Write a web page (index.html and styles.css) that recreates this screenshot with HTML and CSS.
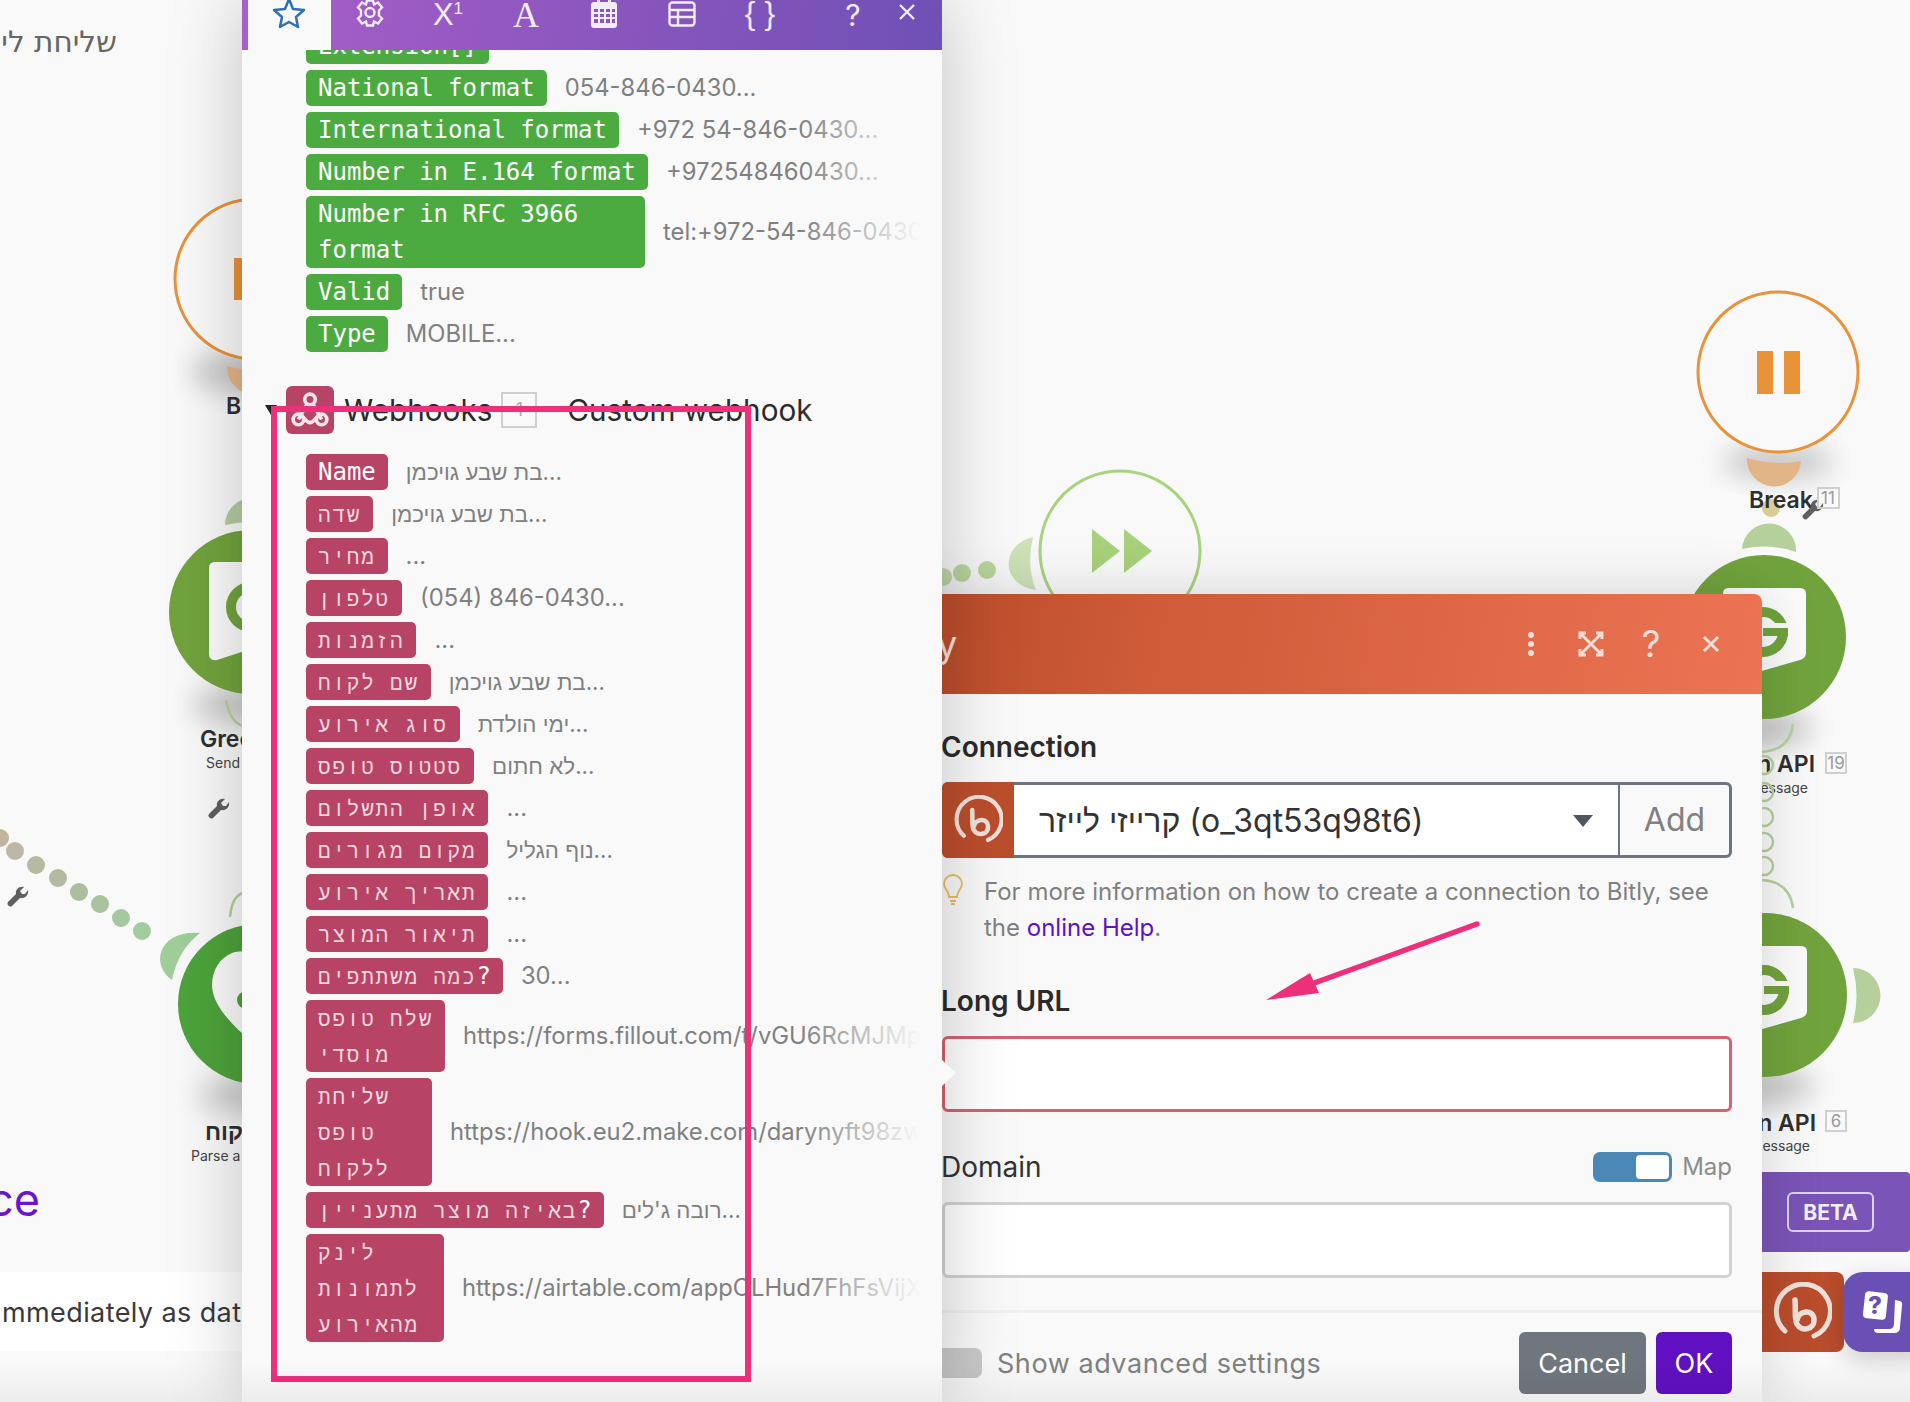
FILE: index.html
```html
<!DOCTYPE html>
<html lang="en">
<head>
<meta charset="utf-8">
<title>Scenario editor</title>
<link rel="stylesheet" href="styles.css">
</head>
<body>
<div class="stage">
  <svg class="canvas" width="1910" height="1402" viewBox="0 0 1910 1402">
    <defs>
      <filter id="blur" x="-50%" y="-50%" width="200%" height="200%"><feGaussianBlur stdDeviation="14"/></filter>
      <path id="wrench" d="M-2 4 L6 -4 C5 -8 9 -12 14 -11 L10 -7 L12 -4 L15 -4 L18 -8 C19 -3 15 1 10 0 L2 8 C0 10 -4 6 -2 4 Z"/>
    </defs>

    <!-- left column -->
    <text class="hebrew-title" x="117" y="52" text-anchor="end">שליחת לי</text>
    <ellipse class="shade" cx="251" cy="372" rx="60" ry="20" filter="url(#blur)"/>
    <circle class="node-break" cx="255" cy="279" r="80"/>
    <rect class="pause" x="234" y="258" width="16" height="42"/>
    <path class="stub-orange" d="M227 366 Q255 374 283 368 A28 28 0 0 1 227 366Z"/>
    <text class="node-title" x="226" y="414">Break</text>

    <path class="stub-green" d="M225 525 A27 27 0 0 1 279 525 Q252 519 225 525Z"/>
    <ellipse class="shade" cx="251" cy="705" rx="60" ry="16" filter="url(#blur)"/>
    <circle class="node-green" cx="251" cy="612" r="82"/>
    <path class="doc" d="M215 562 H287 Q293 562 293 568 V630 Q293 636 287 637 L217 660 Q209 661 209 654 V568 Q209 562 215 562Z"/>
    <circle class="g-ring" cx="251" cy="607" r="20"/>
    <path class="arc" d="M226 700 Q230 722 243 726"/>
    <text class="node-title" x="200" y="747">Green API</text>
    <text class="node-sub" x="206" y="768">Send message</text>
    <use href="#wrench" class="wrench" x="211" y="810"/>

    <circle cx="0" cy="838" r="9" fill="#c3b49f"/>
    <circle cx="15" cy="851" r="9" fill="#bdb8a5"/>
    <circle cx="36" cy="865" r="9" fill="#b7b9a0"/>
    <circle cx="58" cy="878" r="9" fill="#b0bb9f"/>
    <circle cx="79" cy="892" r="9" fill="#abbf9f"/>
    <circle cx="100" cy="904" r="9" fill="#a7c3a0"/>
    <circle cx="121" cy="918" r="9" fill="#a4c9a0"/>
    <circle cx="142" cy="931" r="9" fill="#a2cc9f"/>
    <use href="#wrench" class="wrench" x="10" y="898"/>

    <path class="stub-mint" d="M172 980 C150 965 158 930 200 933 Q178 950 172 980Z"/>
    <path class="arc" d="M230 917 Q232 896 243 893"/>
    <ellipse class="shade" cx="258" cy="1095" rx="60" ry="15" filter="url(#blur)"/>
    <circle class="node-parse" cx="258" cy="1004" r="80"/>
    <path class="doc" d="M232 953 C220 958 212 970 212 985 C212 1005 232 1025 252 1042 L300 1000 L262 958 C250 950 240 950 232 953Z"/>
    <circle cx="246" cy="1000" r="9" fill="#4da33b"/>
    <text class="node-title" x="205" y="1140">קוח</text>
    <text class="node-sub" x="191" y="1161">Parse a phone</text>

    <!-- centre -->
    <path class="stub-light" d="M1036 590 C1000 585 1000 545 1033 537 Q1026 565 1036 590Z"/>
    <circle cx="943" cy="577" r="9" fill="#c3dcab"/>
    <circle cx="962" cy="573" r="9" fill="#bfd9a5"/>
    <circle cx="987" cy="570" r="9" fill="#bcd8a0"/>
    <circle class="node-ff" cx="1120" cy="551" r="80"/>
    <polygon class="ff" points="1092,529 1120,551 1092,573"/>
    <polygon class="ff" points="1124,529 1152,551 1124,573"/>

    <!-- right column -->
    <ellipse class="shade" cx="1778" cy="462" rx="55" ry="16" filter="url(#blur)"/>
    <path class="stub-orange" d="M1747 458 Q1775 466 1801 461 A27 27 0 0 1 1747 458Z"/>
    <circle class="node-break" cx="1778" cy="372" r="80"/>
    <rect class="pause" x="1757" y="351" width="16" height="43"/>
    <rect class="pause" x="1784" y="351" width="16" height="43"/>
    <circle cx="1771" cy="508" r="9" fill="#d5cd95"/>
    <text class="node-title" x="1749" y="508">Break</text>
    <use href="#wrench" class="wrench" x="1805" y="511"/>
    <rect class="count-box" x="1818" y="488" width="21" height="20"/>
    <text class="count" x="1828" y="504" text-anchor="middle">11</text>

    <path class="stub-soft" d="M1742 549 A27 27 0 0 1 1796 552 Q1770 543 1742 549Z"/>
    <ellipse class="shade" cx="1764" cy="728" rx="50" ry="16" filter="url(#blur)"/>
    <circle class="node-green" cx="1764" cy="637" r="82"/>
    <path class="doc-bright" d="M1728 588 H1800 Q1806 588 1806 594 V653 Q1806 658 1800 660 L1730 680 Q1723 681 1723 675 V594 Q1723 588 1728 588Z"/>
    <circle class="g-ring" cx="1763" cy="632" r="20"/>
    <rect class="doc-bright" x="1763" y="623" width="27" height="5"/>
    <rect class="g-bar" x="1763" y="628" width="25" height="8"/>
    <path class="arc" d="M1793 724 Q1790 750 1762 752"/>
    <text class="node-title" x="1815" y="772" text-anchor="end">Green API</text>
    <rect class="count-box" x="1826" y="753" width="20" height="20"/>
    <text class="count" x="1836" y="769" text-anchor="middle">19</text>
    <text class="node-sub" x="1808" y="793" text-anchor="end">Send a message</text>
    <circle class="ring" cx="1764" cy="765" r="9"/>
    <circle class="ring" cx="1764" cy="792" r="9"/>
    <circle class="ring" cx="1764" cy="817" r="9"/>
    <circle class="ring" cx="1764" cy="842" r="9"/>
    <circle class="ring" cx="1764" cy="866" r="9"/>
    <path class="arc" d="M1762 880 Q1790 882 1793 908"/>

    <ellipse class="shade" cx="1765" cy="1086" rx="50" ry="16" filter="url(#blur)"/>
    <circle class="node-green" cx="1765" cy="995" r="82"/>
    <path class="doc-bright" d="M1729 946 H1801 Q1807 946 1807 952 V1011 Q1807 1016 1801 1018 L1731 1038 Q1724 1039 1724 1033 V952 Q1724 946 1729 946Z"/>
    <circle class="g-ring" cx="1764" cy="990" r="20"/>
    <rect class="doc-bright" x="1764" y="981" width="27" height="5"/>
    <rect class="g-bar" x="1764" y="986" width="25" height="8"/>
    <path class="stub-soft" d="M1853 968 A27 27 0 0 1 1853 1023 Q1860 995 1853 968Z"/>
    <text class="node-title" x="1816" y="1131" text-anchor="end">Green API</text>
    <rect class="count-box" x="1826" y="1111" width="20" height="20"/>
    <text class="count" x="1836" y="1127" text-anchor="middle">6</text>
    <text class="node-sub" x="1810" y="1151" text-anchor="end">Send a message</text>
  </svg>

  <div class="title-ce">ce</div>
  <div class="banner">mmediately as data arrives</div>

  <div class="beta-bar"><span class="beta">BETA</span></div>
  <div class="bitly-tile">
    <svg class="logo-large" viewBox="0 0 60 60"><use href="#bitly-mark"/></svg>
  </div>
  <div class="help-tile">
    <svg width="50" height="50" viewBox="0 0 50 50">
      <path class="help-back" d="M38 12 L43 13 Q46 14 45 18 L43 39 Q43 45 37 45 H21 Q17 45 17 41 Q24 41 32 41 Q37 41 37 35 Z"/>
      <rect class="help-card" x="7" y="4" width="23" height="27" rx="4" transform="rotate(6 18 17)"/>
      <text class="help-mark" x="18" y="26" text-anchor="middle">?</text>
    </svg>
  </div>

  <section class="modal">
    <header class="modal-head">
      <span class="modal-title">Bitly</span>
      <span class="modal-actions">
        <span class="slot"><svg class="mi" width="10" height="26" viewBox="0 0 10 26"><circle cx="5" cy="4" r="3"/><circle cx="5" cy="13" r="3"/><circle cx="5" cy="22" r="3"/></svg></span>
        <span class="slot"><svg class="mi-line" width="26" height="26" viewBox="0 0 26 26"><path d="M2 8V2H8M18 2H24V8M24 18V24H18M8 24H2V18M3 3L23 23M23 3L3 23"/></svg></span>
        <span class="slot mi-q">?</span>
        <span class="slot"><svg class="mi-line" width="20" height="20" viewBox="0 0 20 20"><path d="M3 3L17 17M17 3L3 17"/></svg></span>
      </span>
    </header>
    <div class="modal-body">
      <div class="label strong">Connection</div>
      <div class="select">
        <span class="select-icon">
          <svg width="50" height="50" viewBox="0 0 60 60">
            <symbol id="bitly-mark" viewBox="0 0 60 60">
              <path d="M13 49 A27 27 0 1 1 42 54" fill="none" stroke="#efe0da" stroke-width="5" stroke-linecap="round"/>
              <path d="M23 18 C24 28 22 38 25 42 C29 50 43 48 42 37 C41 27 27 28 25 38" fill="none" stroke="#efe0da" stroke-width="5.5" stroke-linecap="round"/>
            </symbol>
            <use href="#bitly-mark"/>
          </svg>
        </span>
        <span class="select-value">קרייזי לייזר (o_3qt53q98t6)</span>
        <span class="caret"></span>
        <span class="select-add">Add</span>
      </div>
      <div class="hint">
        <svg class="bulb" width="22" height="32" viewBox="0 0 22 32"><path d="M7 23 C7 17 2 15 2 10 A9 9 0 0 1 20 10 C20 15 15 17 15 23 Z M8 27 H14 M9 30 H13"/></svg>
        <p class="hint-text">For more information on how to create a connection to Bitly, see<br>the <a class="link" href="#">online Help</a>.</p>
      </div>
      <div class="label strong gap-top">Long URL</div>
      <div class="input input-error"></div>
      <div class="label-row gap-top">
        <span class="label">Domain</span>
        <span class="map-wrap"><span class="toggle"><span class="knob"></span></span><span class="map">Map</span></span>
      </div>
      <div class="input"></div>
    </div>
    <footer class="modal-foot">
      <span class="toggle-off"></span>
      <span class="adv">Show advanced settings</span>
      <button class="btn btn-cancel">Cancel</button>
      <button class="btn btn-ok">OK</button>
    </footer>
  </section>

  <section class="panel">
    <nav class="toolbar">
      <span class="tab">
        <svg width="34" height="32" viewBox="0 0 34 32"><path class="star" d="M17 2 L21 12 L32 13 L24 20 L26 30 L17 25 L8 30 L10 20 L2 13 L13 12 Z"/></svg>
      </span>
      <span class="tool">
        <svg class="tool-line" width="30" height="31" viewBox="0 0 30 28"><circle cx="15" cy="13" r="4.5"/><path d="M12 1 H18 L19 5 L23 3 L27 8 L24 11 L24 16 L27 19 L23 24 L19 22 L18 26 H12 L11 22 L7 24 L3 19 L6 16 L6 11 L3 8 L7 3 L11 5 Z"/></svg>
      </span>
      <span class="tool tool-text tool-x">X<sup class="sup">1</sup></span>
      <span class="tool tool-text tool-a">A</span>
      <span class="tool">
        <svg class="tool-solid" width="26" height="30" viewBox="0 0 26 30"><path fill-rule="evenodd" d="M6 0h3v4h8V0h3v4h3q3 0 3 3v20q0 3-3 3H3q-3 0-3-3V7q0-3 3-3h3zM3 11v3h4v-3zm6 0v3h4v-3h-4zm6 0v3h4v-3zm6 0v3h3v-3zM3 16v3h4v-3zm6 0v3h4v-3zm6 0v3h4v-3zm6 0v3h3v-3zM3 21v4h4v-4zm6 0v4h4v-4zm6 0v4h4v-4zm6 0v4h3v-4z"/></svg>
      </span>
      <span class="tool tool-table">
        <svg class="tool-line" width="28" height="26" viewBox="0 0 28 26"><rect x="1.500" y="1.500" width="25" height="23" rx="3"/><path d="M2 9H26M2 16H26M10 9V24"/></svg>
      </span>
      <span class="tool tool-text tool-brace">{ }</span>
      <span class="tool tool-small tool-text tool-q">?</span>
      <span class="tool tool-small">
        <svg class="tool-line" width="18" height="18" viewBox="0 0 18 18"><path d="M2 2L16 16M16 2L2 16"/></svg>
      </span>
    </nav>
    <div class="panel-scroll">
      <div class="twist-dot"></div>
      <div class="row"><span class="tag green">Extension[]</span></div>
      <div class="row"><span class="tag green">National format</span><span class="val">054-846-0430...</span></div>
      <div class="row"><span class="tag green">International format</span><span class="val">+972 54-846-0430...</span></div>
      <div class="row"><span class="tag green">Number in E.164 format</span><span class="val">+972548460430...</span></div>
      <div class="row"><span class="tag green w-rfc">Number in RFC 3966<br>format</span><span class="val">tel:+972-54-846-0430...</span></div>
      <div class="row"><span class="tag green">Valid</span><span class="val">true</span></div>
      <div class="row"><span class="tag green">Type</span><span class="val">MOBILE...</span></div>

      <div class="group-head">
        <span class="caret-dark"></span>
        <span class="hook-icon">
          <svg width="40" height="40" viewBox="0 0 38 38"><g class="hook-lines"><circle cx="19" cy="9" r="5"/><circle cx="8" cy="28" r="5"/><circle cx="30" cy="28" r="5"/><path d="M16 14 C13 19 11 22 8 28 M8 24 C14 24 14 31 19 31 C24 31 24 24 30 24 M22 14 C25 19 27 22 30 28"/></g></svg>
        </span>
        <span class="group-name">Webhooks</span>
        <span class="group-count">1</span>
        <span class="group-name group-type">Custom webhook</span>
      </div>

      <div class="row"><span class="tag pink">Name</span><span class="val val-he">בת שבע גויכמן...</span></div>
      <div class="row"><span class="tag pink"><span class="he">שדה</span></span><span class="val val-he">בת שבע גויכמן...</span></div>
      <div class="row"><span class="tag pink"><span class="he">מחיר</span></span><span class="val">...</span></div>
      <div class="row"><span class="tag pink"><span class="he">טלפון</span></span><span class="val">(054) 846-0430...</span></div>
      <div class="row"><span class="tag pink"><span class="he">הזמנות</span></span><span class="val">...</span></div>
      <div class="row"><span class="tag pink"><span class="he">שם לקוח</span></span><span class="val val-he">בת שבע גויכמן...</span></div>
      <div class="row"><span class="tag pink"><span class="he">סוג אירוע</span></span><span class="val val-he">ימי הולדת...</span></div>
      <div class="row"><span class="tag pink"><span class="he">סטטוס טופס</span></span><span class="val val-he">לא חתום...</span></div>
      <div class="row"><span class="tag pink"><span class="he">אופן התשלום</span></span><span class="val">...</span></div>
      <div class="row"><span class="tag pink"><span class="he">מקום מגורים</span></span><span class="val val-he">נוף הגליל...</span></div>
      <div class="row"><span class="tag pink"><span class="he">תאריך אירוע</span></span><span class="val">...</span></div>
      <div class="row"><span class="tag pink"><span class="he">תיאור המוצר</span></span><span class="val">...</span></div>
      <div class="row"><span class="tag pink"><span class="he">כמה משתתפים</span>?</span><span class="val">30...</span></div>
      <div class="row"><span class="tag pink w-139"><span class="he">שלח טופס<br>מוסדי</span></span><span class="val">https://forms.fillout.com/t/vGU6RcMJMp...</span></div>
      <div class="row"><span class="tag pink w-126"><span class="he">שליחת<br>טופס<br>ללקוח</span></span><span class="val">https://hook.eu2.make.com/darynyft98zw...</span></div>
      <div class="row"><span class="tag pink"><span class="he">באיזה מוצר מתעניין</span>?</span><span class="val val-he">רובה ג'לים...</span></div>
      <div class="row"><span class="tag pink w-138"><span class="he">לינק<br>לתמונות<br>מהאירוע</span></span><span class="val">https://airtable.com/appOLHud7FhFsVijX...</span></div>
    </div>
    <div class="fade"></div>
  </section>

  <div class="pointer"></div>
  <div class="highlight"></div>
  <svg class="annot" width="240" height="100" viewBox="0 0 240 100">
    <path class="annot-line" d="M231 5 L60 67"/>
    <polygon class="annot-head" points="20,81 64,54 73,74"/>
  </svg>
  <div class="bottom-shade"></div>
</div>
</body>
</html>
```
FILE: styles.css
```css
* { box-sizing: border-box; }
html, body { margin: 0; padding: 0; }
body { font-family: Inter, "Liberation Sans", sans-serif; background: #f9f9f9; }

.stage { position: relative; width: 1910px; height: 1402px; overflow: hidden; background: #f9f9f9; }
.canvas { position: absolute; left: 0; top: 0; }

/* diagram */
.hebrew-title { font-family: "DejaVu Sans", sans-serif; font-size: 29.500px; fill: #666; }
.shade { fill: #000; opacity: .22; }
.node-break { fill: #f9f9f9; stroke: #e8923a; stroke-width: 3; }
.pause { fill: #e8923a; }
.stub-orange { fill: #e2b588; }
.stub-green { fill: #b3cca0; }
.stub-soft { fill: #b6d09c; }
.stub-mint { fill: #9fce99; }
.stub-light { fill: #cde2b8; }
.node-green { fill: #71a33d; }
.node-parse { fill: #4da33b; }
.doc, .doc-bright { fill: #fbfbfb; }
.g-ring { fill: none; stroke: #71a33d; stroke-width: 10; }
.g-bar { fill: #71a33d; }
.arc { fill: none; stroke: #b6d09c; stroke-width: 2.500; }
.ring { fill: none; stroke: #b6d09c; stroke-width: 2.500; }
.node-ff { fill: #f9f9f9; stroke: #a9d27f; stroke-width: 3; }
.ff { fill: #a9d07a; }
.node-title { font-family: Inter, "Liberation Sans", sans-serif; font-weight: 600; font-size: 23px; fill: #2f2f2f; }
.node-sub { font-family: Inter, "Liberation Sans", sans-serif; font-size: 14px; fill: #444; }
.count-box { fill: none; stroke: #cfcfcf; stroke-width: 2; }
.count { font-family: Inter, "Liberation Sans", sans-serif; font-size: 17px; fill: #999; }
.wrench { fill: #5f5f5f; }

.title-ce { position: absolute; left: -12px; top: 1170px; font-size: 45px; line-height: 60px; color: #6a14cc; white-space: nowrap; }
.banner { position: absolute; left: 0; top: 1272px; width: 242px; height: 79px; padding-left: 2px; background: #fff; font-size: 27px; line-height: 81px; color: #3a3a3a; white-space: nowrap; overflow: hidden; letter-spacing: .4px; }

.beta-bar { position: absolute; left: 1720px; top: 1172px; width: 190px; height: 80px; border-radius: 0 4px 4px 0; background: #7a54b6; display: flex; align-items: center; padding-left: 67px; }
.beta { width: 87px; height: 40px; border: 2px solid #dcd2ee; border-radius: 6px; color: #f4f0fa; font-size: 21px; font-weight: 700; line-height: 38px; text-align: center; }
.bitly-tile { position: absolute; left: 1740px; top: 1272px; width: 104px; height: 80px; border-radius: 8px; background: #b94d2c; display: flex; align-items: center; justify-content: flex-end; padding-right: 12px; }
.logo-large { width: 60px; height: 60px; }
.help-tile { position: absolute; left: 1843px; top: 1272px; width: 90px; height: 80px; border-radius: 20px; background: #6a4fb4; padding: 16px 0 0 14px; box-shadow: 0 8px 24px rgba(0,0,0,.18); }
.help-back, .help-card { fill: #fff; }
.help-mark { font-family: Inter, sans-serif; font-size: 24px; font-weight: 800; fill: #6a4fb4; }

/* modal */
.modal { position: absolute; left: 870px; top: 594px; width: 892px; height: 808px; border-radius: 0 8px 0 0; background: #f9f9f9; box-shadow: 0 0 60px rgba(0,0,0,.16); display: flex; flex-direction: column; }
.modal-head { height: 100px; flex: none; border-radius: 0 8px 0 0; background: linear-gradient(100deg, #bb4e2c 10%, #cf5b39 32%, #ec7454 100%); display: flex; align-items: center; justify-content: space-between; padding: 0 21px 0 14px; }
.modal-title { font-size: 36px; color: #f5e2da; }
.modal-actions { display: flex; align-items: center; }
.slot { width: 60px; display: flex; justify-content: center; align-items: center; }
.mi { fill: #f6ded6; }
.mi-line { fill: none; stroke: #f6ded6; stroke-width: 3; }
.mi-q { font-size: 37px; line-height: 40px; color: #f6ded6; }
.modal-body { padding: 35px 30px 0 72px; }
.label { font-size: 28px; line-height: 36px; color: #333; margin-left: -1px; }
.strong { font-weight: 600; color: #2b2b2b; }
.gap-top { margin-top: 37px; }
.select { margin-top: 17px; height: 76px; display: flex; align-items: center; border: 3px solid #6f7580; border-left: 0; border-radius: 6px; position: relative; }
.select-icon { width: 72px; height: 76px; margin: -3px 0; flex: none; background: #bb4e2c; border-radius: 6px 0 0 6px; display: flex; align-items: center; justify-content: center; }
.select-value { flex: 1; height: 100%; padding-left: 25px; background: #fff; font-size: 32px; line-height: 71px; color: #333; white-space: nowrap; }
.caret { position: absolute; left: 631px; top: 30px; border: 10.500px solid transparent; border-top: 12px solid #50555f; border-bottom: 0; }
.select-add { width: 111px; height: 100%; flex: none; border-left: 2px solid #6f7580; font-size: 32px; line-height: 69px; text-align: center; color: #808080; }
.hint { margin-top: 16px; display: flex; gap: 20px; }
.bulb { flex: none; fill: none; stroke: #e8bd62; stroke-width: 1.800; }
.hint-text { margin: 0; font-size: 24px; line-height: 36px; color: #808080; white-space: nowrap; }
.link { color: #6010c8; text-decoration: none; }
.input { margin-top: 17px; height: 76px; border: 3px solid #d2d2d2; border-radius: 6px; background: #fff; }
.input-error { border-color: #d9606e; }
.label-row { display: flex; align-items: center; justify-content: space-between; }
.map-wrap { display: flex; align-items: center; gap: 10px; }
.toggle { width: 79px; height: 30px; border-radius: 7px; background: #4b88b6; padding: 3px; display: flex; justify-content: flex-end; }
.knob { width: 33px; height: 24px; border-radius: 4px; background: #fff; }
.map { font-size: 24px; line-height: 36px; color: #8c8c8c; }
.modal-foot { margin-top: 32px; flex: none; border-top: 3px solid #efefef; padding: 19px 30px 0 72px; display: flex; align-items: flex-start; }
.toggle-off { width: 40px; height: 30px; margin-top: 16px; border-radius: 0 7px 7px 0; background: #c8c8c8; }
.adv { flex: 1; margin-left: 15px; margin-top: 14px; font-size: 27px; line-height: 36px; color: #808080; letter-spacing: .55px; }
.btn { height: 62px; border: 0; border-radius: 6px; font-family: inherit; font-size: 27px; color: #fff; padding: 0; }
.btn-cancel { width: 127px; background: #6f767e; }
.btn-ok { width: 76px; margin-left: 10px; background: #6010c0; }

/* left panel */
.panel { position: absolute; left: 242px; top: 0; width: 700px; height: 1402px; overflow: hidden; background: #f9f9f9; box-shadow: 0 0 70px rgba(0,0,0,.22); }
.toolbar { position: relative; z-index: 2; height: 50px; padding-left: 6px; display: flex; background: linear-gradient(100deg, #a95fc8 0%, #9158c0 40%, #6f50b5 100%); }
.tab { width: 83px; height: 50px; flex: none; background: #f9f9f9; overflow: hidden; }
.tab svg { display: block; margin: -3px 0 0 24px; }
.star { fill: none; stroke: #2f6fb5; stroke-width: 2.500; stroke-linejoin: round; }
.tool { width: 78px; height: 50px; flex: none; overflow: hidden; display: flex; justify-content: center; align-items: flex-start; color: #f3ecfa; }
.tool-small { width: 54px; }
.tool > svg { margin-top: -2px; }
.tool-table > svg { margin-top: 1px; }
.tool-small > svg { margin-top: 3px; }
.tool-line { fill: none; stroke: #f3ecfa; stroke-width: 2.400; }
.tool-solid { fill: #f3ecfa; }
.tool-text { font-size: 32px; line-height: 30px; }
.tool-x { font-family: "Liberation Sans", sans-serif; font-size: 31px; }
.sup { font-size: 17px; line-height: 1; vertical-align: 14px; }
.tool-a { font-family: "Liberation Serif", serif; font-size: 36px; line-height: 30px; }
.tool-brace { font-family: "Liberation Sans", sans-serif; line-height: 26px; }
.tool-q { font-size: 30px; margin-left: 27px; }

.panel-scroll { margin-top: -22px; padding-left: 64px; display: flex; flex-direction: column; gap: 6px; position: relative; }
.twist-dot { position: absolute; left: 47px; top: 19px; width: 3px; height: 3px; background: #333; }
.row { display: flex; align-items: center; gap: 18px; white-space: nowrap; }
.tag { flex: none; padding: 0 12px; border-radius: 5px; font-family: "DejaVu Sans Mono", "Liberation Mono", monospace; font-size: 24px; line-height: 36px; color: #fff; }
.green { background: #4cab40; }
.pink { background: #b74365; }
.he { font-family: "Liberation Mono", "DejaVu Sans Mono", monospace; font-size: 21px; letter-spacing: 1.800px; color: #f3d7df; line-height: 0; }
.w-rfc { width: 339px; }
.w-139 { width: 139px; }
.w-126 { width: 126px; }
.w-138 { width: 138px; }
.val { font-size: 23.800px; line-height: 36px; color: #808080; }
.val-he { font-size: 22.300px; }
.group-head { margin: 28px 0 14px -20px; height: 48px; display: flex; align-items: center; position: relative; }
.caret-dark { position: absolute; left: -21px; top: 19px; border: 6px solid transparent; border-top: 10px solid #222; border-bottom: 0; }
.hook-icon { width: 48px; height: 48px; flex: none; border-radius: 6px; background: #b74365; display: flex; align-items: center; justify-content: center; }
.hook-lines { fill: none; stroke: #f6e6eb; stroke-width: 3.500; }
.group-name { margin-left: 10px; font-size: 29.700px; color: #2b2b2b; }
.group-count { width: 36px; height: 36px; margin-left: 9px; border: 2px solid #cfcfcf; font-size: 18px; line-height: 32px; text-align: center; color: #a9a9a9; }
.group-type { margin-left: 30px; }
.fade { position: absolute; right: 0; top: 50px; bottom: 0; width: 142px; background: linear-gradient(90deg, rgba(249,249,249,0) 0%, #f9f9f9 85%); }

/* annotations and overlays */
.pointer { position: absolute; left: 942px; top: 1060px; border-left: 14px solid #f9f9f9; border-top: 13px solid transparent; border-bottom: 13px solid transparent; }
.highlight { position: absolute; left: 271px; top: 406px; width: 480px; height: 976px; border: 6px solid #ec3079; }
.annot { position: absolute; left: 1246px; top: 919px; }
.annot-line { fill: none; stroke: #ec3079; stroke-width: 5.500; stroke-linecap: round; }
.annot-head { fill: #ec3079; }
.bottom-shade { position: absolute; left: 0; right: 0; bottom: 0; height: 40px; background: linear-gradient(180deg, rgba(0,0,0,0), rgba(0,0,0,.05)); pointer-events: none; }
```
